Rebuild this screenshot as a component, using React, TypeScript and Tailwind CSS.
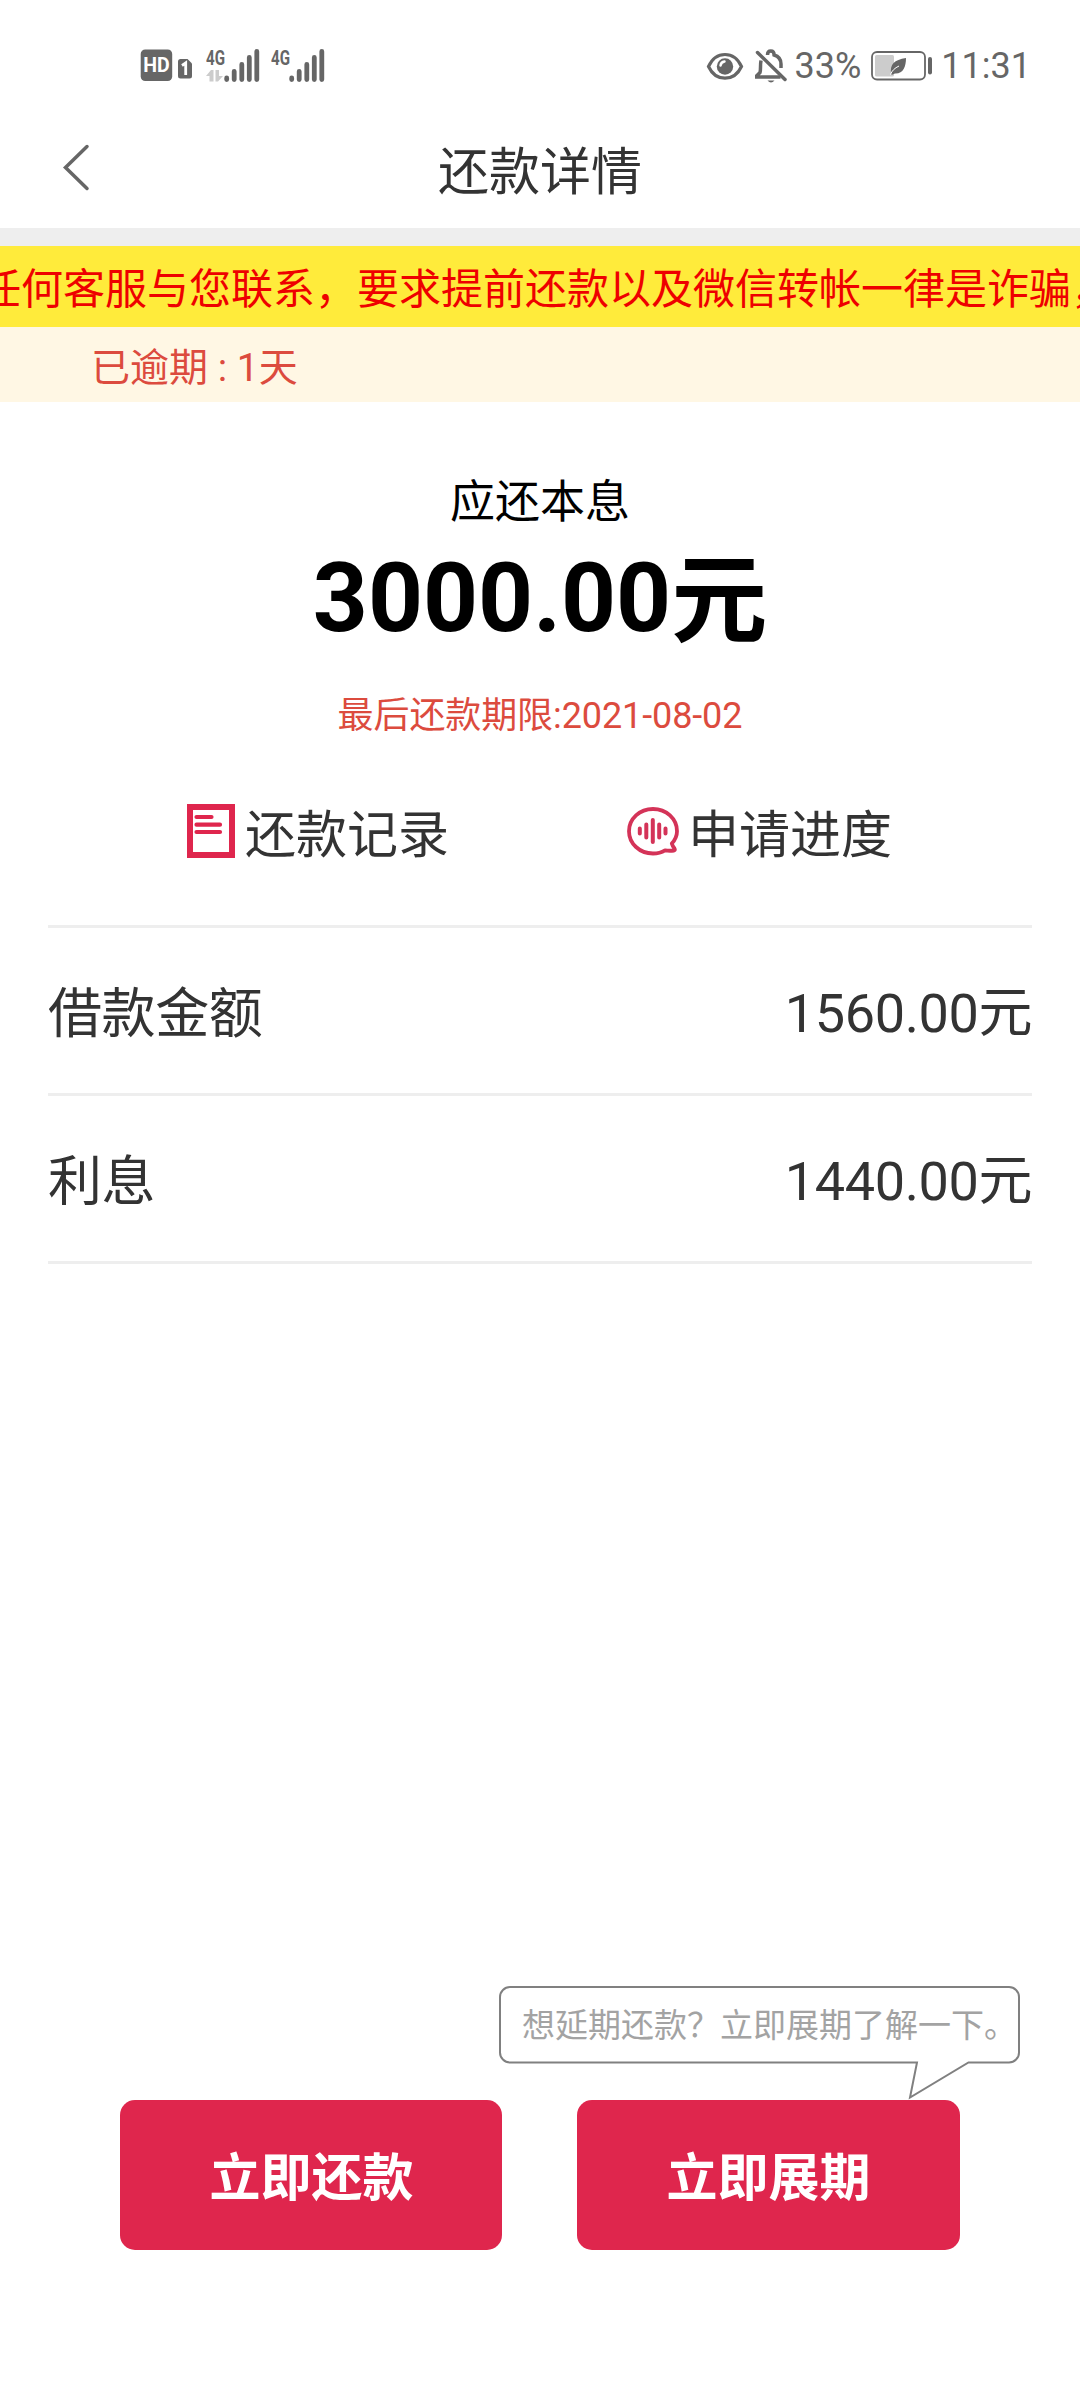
import React from 'react';

interface SignalProps {
  withData?: boolean;
}

const Signal: React.FC<SignalProps> = ({ withData = false }) => (
  <svg width="54" height="36" viewBox="0 0 54 36" fill="#666666">
    <text
      x="0"
      y="17.5"
      fontSize="21"
      fontWeight="700"
      textLength="19"
      lengthAdjust="spacingAndGlyphs"
    >
      4G
    </text>
    {withData && (
      <path d="M0 29l5-6h2.500v11.500h-4v-5.500zM9.500 23h3.500v6h4l-5 5.500h-2.500z" fill="#cccccc" />
    )}
    <g stroke="#666666" strokeWidth="4.800" strokeLinecap="round">
      <path d="M20.700 31v1.500M28.200 24.500v8M35.800 17.500v15M43.300 10.500v22M50.800 4.500v28" />
    </g>
  </svg>
);

const StatusBar: React.FC = () => (
  <div className="flex h-[130px] items-center justify-between pl-[140px] pr-[49px] text-[#666666]">
    <div className="flex items-center">
      <svg width="54" height="36" viewBox="0 0 54 36">
        <rect x="0.700" y="2.500" width="31.500" height="31.500" rx="4.500" fill="#666666" />
        <text
          x="3.200"
          y="24.500"
          fontSize="21"
          fontWeight="700"
          fill="#ffffff"
          textLength="26.500"
          lengthAdjust="spacingAndGlyphs"
        >
          HD
        </text>
        <path d="M40.500 12h7l4.500 4.500v12.500q0 2.500-2.500 2.500h-9q-2.500 0-2.500-2.500v-14.500q0-2.500 2.500-2.500z" fill="#666666" />
        <path d="M42 18.500l3.700-2.500v12" fill="none" stroke="#ffffff" strokeWidth="2.800" />
      </svg>
      <div className="ml-3 flex gap-[11px]">
        <Signal withData />
        <Signal />
      </div>
    </div>
    <div className="flex items-center pt-[2px] text-[36px] leading-[42px]">
      <svg width="38" height="36" viewBox="0 0 38 36" className="mr-[11px]">
        <path
          d="M2.500 18.500C6 11 12 6.500 19 6.500s13 4.500 16.500 12C32 26 26 30.200 19 30.200S6 26 2.500 18.500z"
          fill="none"
          stroke="#666666"
          strokeWidth="3.200"
        />
        <circle cx="19" cy="18.500" r="8.200" fill="#666666" />
        <path d="M14.500 17.500q.5-3.500 4-4" fill="none" stroke="#ffffff" strokeWidth="2.500" strokeLinecap="round" />
      </svg>
      <svg width="32" height="36" viewBox="0 0 32 36" className="mr-2" fill="none" stroke="#666666" strokeWidth="3.500">
        <path d="M12.500 7q0-4 3.300-4t3.300 4c5 1.500 6.900 5 6.900 9v4M6 12.500c-1 5 0 9-1 12l-3.500 3.500v1h24" />
        <path d="M2.500 4.500l27.500 27" strokeLinecap="round" />
        <path d="M12.500 32.500h7q-3.500 4-7 0z" fill="#666666" stroke="none" />
      </svg>
      <span>33%</span>
      <svg width="62" height="36" viewBox="0 0 62 36" className="ml-[10px] mr-[8px]">
        <rect x="1" y="4" width="53" height="27.500" rx="5" fill="none" stroke="#666666" strokeWidth="1.800" />
        <rect x="4" y="7" width="19" height="21.500" rx="1.500" fill="#cccccc" />
        <path d="M20 26c-1-10 3-14 15-16 0 9-3 16-11 15.500l-3 1.200z" fill="#666666" />
        <path d="M19.500 26.500q2-5.500 8.500-8.500" fill="none" stroke="#ffffff" strokeWidth="1" />
        <path d="M59 11v13.500" stroke="#666666" strokeWidth="4" strokeLinecap="round" />
      </svg>
      <span>11:31</span>
    </div>
  </div>
);

const RecordIcon: React.FC = () => (
  <svg width="48" height="54" viewBox="0 0 48 54" fill="none" stroke="#df264d">
    <rect x="3" y="3" width="42" height="48" strokeWidth="6" />
    <path d="M9.500 13h15M9.500 20.700h23.500M9.500 28h23.500" strokeWidth="4.200" strokeLinecap="round" />
  </svg>
);

const ProgressIcon: React.FC = () => (
  <svg
    width="52"
    height="50"
    viewBox="0 0 52 50"
    className="mt-[2px]"
    fill="none"
    stroke="#d43358"
    strokeLinecap="round"
    strokeLinejoin="round"
  >
    <path
      d="M44.800 37.500C48 34 50 30 50 25.200C50 12.800 39.300 3 26 3S2 12.800 2 25.200S12.700 47.500 26 47.500c4.500 0 8.500-1 12-3.200q4 .8 9 .2q1.500-.5.5-2q-2-2.500-2.700-5z"
      strokeWidth="3.800"
    />
    <path d="M12.800 22.500v5M19.300 18.500v13M25.800 14v22M32.200 18.500v13M38.500 22.500v5" strokeWidth="4" />
  </svg>
);

interface DetailRowProps {
  label: string;
  value: string;
}

const DetailRow: React.FC<DetailRowProps> = ({ label, value }) => (
  <div className="flex h-[168px] items-center justify-between border-b-[3px] border-[#eeeeee] pt-[6px] text-[54px] leading-[60px] tracking-[-0.4px]">
    <span className="pt-[3px]">{label}</span>
    <span>{value}</span>
  </div>
);

const details: DetailRowProps[] = [
  { label: '借款金额', value: '1560.00元' },
  { label: '利息', value: '1440.00元' },
];

const App: React.FC = () => {
  return (
    <div className="flex h-[2400px] w-[1080px] flex-col overflow-hidden bg-white font-['Roboto','Noto_Sans_CJK_SC',sans-serif] text-[#333333]">
      <StatusBar />

      <header className="grid h-[98px] grid-cols-3 items-center px-[62px]">
        <svg width="28" height="48" viewBox="0 0 28 48" className="-mt-[24px]">
          <path d="M25 3.500L3.500 24.500L25 45.500" fill="none" stroke="#666666" strokeWidth="3.500" strokeLinecap="round" />
        </svg>
        <h1 className="-mt-[13px] text-center text-[51px] leading-[60px]">还款详情</h1>
      </header>

      <div className="h-[18px] shrink-0 bg-[#eeeeee]" />
      {/* scrolling notice, runs past both edges */}
      <div className="h-[81px] shrink-0 overflow-hidden whitespace-nowrap bg-[#ffeb3b] text-[42px] leading-[88px] text-[#ee0000]">
        <p className="-ml-[21px]">任何客服与您联系，要求提前还款以及微信转帐一律是诈骗，</p>
      </div>
      <div className="h-[75px] shrink-0 bg-[#fff7e4] pl-[91px] text-[39px] leading-[82px] text-[#dc4b3e]">
        已逾期 : 1天
      </div>

      <section className="flex flex-col items-center pt-[71px]">
        <p className="text-[45px] leading-[60px] text-black">应还本息</p>
        <p className="h-[130px] text-[96px] font-bold leading-[130px] text-black">
          3000.00<span className="align-[-3px] leading-none">元</span>
        </p>
        <p className="mt-[31px] text-[36px] leading-[44px] tracking-[-0.1px] text-[#dc4b3e]">最后还款期限:2021-08-02</p>
      </section>

      <div className="flex h-[187px] pl-[187px] pt-[66px] text-[51px] leading-[64px]">
        <div className="flex w-[440px] items-start">
          <RecordIcon />
          <span className="ml-[10px]">还款记录</span>
        </div>
        <div className="flex items-start">
          <ProgressIcon />
          <span className="ml-[9px]">申请进度</span>
        </div>
      </div>

      <div className="mx-12 border-t-[3px] border-[#eeeeee]">
        {details.map((item) => (
          <DetailRow key={item.label} label={item.label} value={item.value} />
        ))}
      </div>

      <footer className="mt-auto pb-[150px]">
        <div className="relative ml-[499px] h-[115px] w-[521px]">
          <svg width="521" height="115" viewBox="0 0 521 115" className="absolute inset-0">
            <path
              d="M11 2H510a10 10 0 0 1 10 10V67.500a10 10 0 0 1-10 10H469.500L411 112.500L418 77.500H11a10 10 0 0 1-10-10V12a10 10 0 0 1 10-10z"
              fill="#ffffff"
              stroke="#808080"
              strokeWidth="2"
            />
          </svg>
          <p className="relative whitespace-nowrap pl-[23px] text-[33px] leading-[82px] text-[#a3a3a3]">
            想延期还款？立即展期了解一下。
          </p>
        </div>
        <div className="flex gap-[75px] px-[120px] text-[51px] font-bold text-white">
          <button className="h-[150px] w-[382px] rounded-[15px] bg-[#df264d] pl-px pt-[8px]">立即还款</button>
          <button className="h-[150px] w-[383px] rounded-[15px] bg-[#df264d] pt-[8px]">立即展期</button>
        </div>
      </footer>
    </div>
  );
};

export default App;
